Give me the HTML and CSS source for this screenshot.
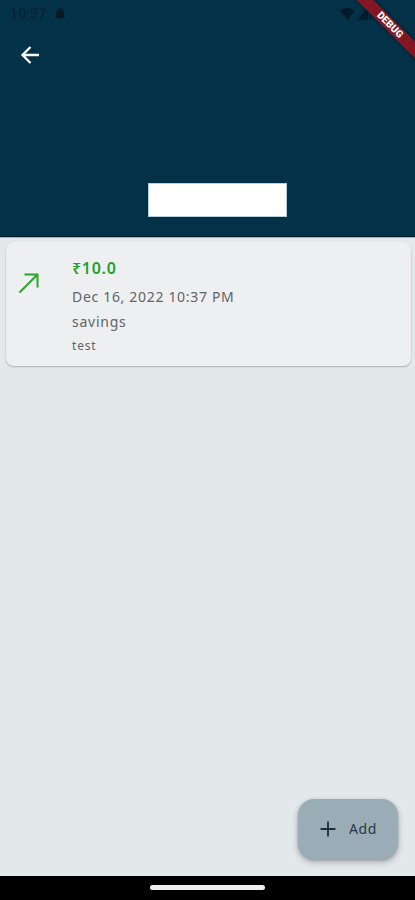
FILE: index.html
```html
<!DOCTYPE html>
<html lang="en">
<head>
<meta charset="utf-8">
<title>Savings</title>
<link rel="stylesheet" href="styles.css">
</head>
<body>
<div class="screen">
  <header class="header">
    <div class="status">
      <span class="time">10:37</span>
      <svg class="bell" viewBox="0 0 12 12"><path d="M6 0C5.300 0 5 .5 5 1.200C3 1.700 2.300 3.200 2.300 5V8L1 9.500V10H11V9.500L9.700 8V5C9.700 3.200 9 1.700 7 1.200C7 .5 6.700 0 6 0ZM4.700 10.600H7.300C7.200 12 4.800 12 4.700 10.600Z"/></svg>
      <svg class="signals" viewBox="0 0 32 14"><path d="M0 3.500Q7.500-1.500 15 3.500L7.500 13ZM17 13L28 1V13ZM29.500 1H31V13H29.500Z"/></svg>
    </div>
    <svg class="back" viewBox="0 0 20 20"><path d="M19 10H2.500M10.500 2L2.500 10L10.500 18"/></svg>
    <div class="amount-box"></div>
    <div class="ribbon">DEBUG</div>
  </header>
  <main class="content">
    <article class="card">
      <svg class="trend" viewBox="0 0 22 22"><path d="M1.500 20.500L19 3M6.500 2.500H19.500V15.500"/></svg>
      <div class="details">
        <div class="sum">₹10.0</div>
        <div class="date">Dec 16, 2022 10:37 PM</div>
        <div class="category">savings</div>
        <div class="note">test</div>
      </div>
    </article>
    <button class="add">
      <svg class="plus" viewBox="0 0 16 16"><path d="M8 .5V15.500M.5 8H15.500"/></svg>
      <span>Add</span>
    </button>
  </main>
  <footer class="nav"><div class="handle"></div></footer>
</div>
</body>
</html>
```
FILE: styles.css
```css
* { box-sizing: border-box; }
body { margin: 0; font-family: "Noto Sans", sans-serif; }
.screen {
  width: 415px; height: 900px;
  display: flex; flex-direction: column;
  overflow: hidden; background: #e3e8ea;
}
.header {
  position: relative; flex: none; height: 237px;
  display: flex; flex-direction: column;
  background: #033148; overflow: hidden;
  border-bottom: 1px solid #001d30;
}
.status { display: flex; align-items: center; height: 28px; padding: 0 43px 0 10px; }
.time {
  width: 44px; font: 14px/20px Roboto, sans-serif;
  letter-spacing: .3px; color: #06202e;
}
.bell { width: 12px; height: 12px; fill: #051a24; }
.signals { width: 32px; height: 14px; margin-left: auto; fill: #041c29; }
.back {
  width: 20px; height: 20px; margin: 17px 0 0 20px;
  fill: none; stroke: #fff; stroke-width: 2.300;
}
.amount-box {
  width: 139px; height: 34px; margin: 118px 0 0 148px;
  background: #fff; border: 1px solid #b5d0dc;
}
.ribbon {
  position: absolute; left: 330px; top: 19px;
  width: 120px; height: 12px; transform: rotate(45deg);
  background: #831622; color: #fff; text-align: center;
  font: 900 10px/12px Roboto, sans-serif; letter-spacing: .1px;
  box-shadow: 0 0 4px rgba(0, 0, 0, .45);
}
.content {
  flex: 1; display: flex; flex-direction: column;
  padding: 4px 4px 17px 6px; border-top: 1px solid #a5b0b6;
}
.card {
  display: flex; height: 124px; padding: 0 12px;
  border-radius: 8px; background: #edeff1;
  box-shadow: 0 1px 2px rgba(0, 0, 0, .25);
}
.trend {
  width: 22px; height: 22px; margin: 30px 32px 0 0;
  fill: none; stroke: #2ba52f; stroke-width: 2;
}
.details { padding-top: 14px; color: #606568; }
.sum { font-size: 16px; line-height: 24px; font-weight: 600; color: #25a12a; letter-spacing: .7px; }
.date { margin-top: 5px; font-size: 14px; line-height: 24px; letter-spacing: .68px; }
.category { margin-top: 1px; font-size: 14px; line-height: 24px; letter-spacing: .75px; }
.note { margin-top: 2px; font-size: 12px; line-height: 20px; letter-spacing: .8px; }
.add {
  display: flex; align-items: center; gap: 13px;
  width: 100px; height: 60px; margin: auto 13px 0 auto; padding: 0 0 0 22px;
  border: 0; border-radius: 16px; background: #9aadb7; color: #263944;
  font: 14px/20px "Noto Sans", sans-serif; letter-spacing: .6px;
  box-shadow: 0 3px 6px rgba(0, 0, 0, .28), 0 1px 3px rgba(0, 0, 0, .15);
}
.plus { width: 16px; height: 16px; fill: none; stroke: #1c303b; stroke-width: 1.800; }
.nav {
  flex: none; height: 24px; display: flex; justify-content: center;
  align-items: center; background: #000;
}
.handle { width: 115px; height: 5px; margin-bottom: 2px; border-radius: 3px; background: #f2f0ef; }
```
